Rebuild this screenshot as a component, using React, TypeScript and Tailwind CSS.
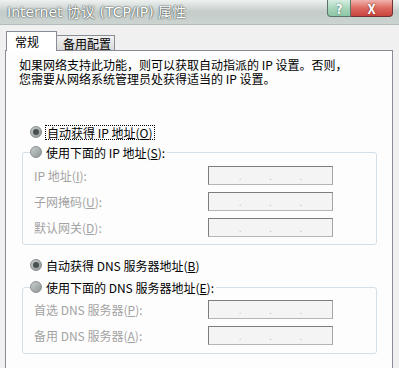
import React from 'react'

const cjk = { fontFamily: '"Noto Sans CJK SC", "Liberation Sans", sans-serif' }

function Radio({ checked }: { checked?: boolean }) {
  return (
    <span className="flex h-[12px] w-[12px] shrink-0 items-center justify-center rounded-full border border-[#8a8f8f] bg-gradient-to-br from-[#c9cdcd] to-[#8f9595]">
      {checked && <span className="h-[6px] w-[6px] rounded-full bg-[#4a4f4f]" />}
    </span>
  )
}

function Mn({ k }: { k: string }) {
  return (
    <>
      (<span className="underline">{k}</span>)
    </>
  )
}

function IpBox() {
  return (
    <div className="flex h-[19px] w-[125px] items-center justify-around border border-[#7d7d7d] border-b-[#b5b5b5] border-r-[#a5a5a5] bg-[#f4f4f4] px-[16px] text-[10px] leading-none text-[#c4c4c4]">
      <span>.</span>
      <span>.</span>
      <span>.</span>
    </div>
  )
}

function Row({ label, last }: { label: React.ReactNode; last?: boolean }) {
  return (
    <div className={`flex items-center ${last ? '' : 'mb-[7px]'}`}>
      <span className="w-[185px] pl-[11px] text-[#a3a3a3]">{label}</span>
      <IpBox />
    </div>
  )
}

export default function App() {
  return (
    <div className="h-[368px] w-[399px] overflow-hidden bg-[#f0f0f0] text-[12px] leading-[13px] text-black" style={cjk}>
      <div className="flex h-[25px] items-start justify-between border-b border-[#b3bcb9] bg-gradient-to-b from-[#eef2f1] via-[#c3ccc9] to-[#ccd4d1]">
        <span
          className="pl-[7px] pt-[4px] text-[14px] leading-[17px] text-white [text-shadow:0_0_2px_#3f4846,0_0_1px_#3f4846]"
          style={{ fontFamily: '"DejaVu Sans", "Noto Sans CJK SC", sans-serif' }}
        >
          Internet 协议 (TCP/IP) 属性
        </span>
        <div className="mr-[6px] flex">
          <div className="flex h-[17px] w-[24px] items-center justify-center rounded-bl-[4px] border border-t-0 border-[#5c7468] bg-gradient-to-b from-[#d6eee2] via-[#a9d6bd] to-[#8cc6a6] text-[13px] font-bold text-white [text-shadow:0_0_2px_#3d6b52]">
            ?
          </div>
          <div className="flex h-[17px] w-[42px] items-center justify-center rounded-br-[4px] border border-l-0 border-t-0 border-[#6e3434] bg-gradient-to-b from-[#f0b3ad] via-[#dc6a62] to-[#c9443c] text-[13px] font-bold text-white [text-shadow:0_0_2px_#6b2520]">
            X
          </div>
        </div>
      </div>

      <div className="ml-[6px] mt-[6px] flex items-end">
        <div className="relative z-10 -mb-px flex h-[20px] w-[51px] items-center border border-b-0 border-[#898c95] bg-white pl-[8px]">
          常规
        </div>
        <div className="flex h-[15px] w-[58px] items-center border border-b-0 border-l-0 border-[#898c95] bg-gradient-to-b from-[#f2f2f2] to-[#d9d9d9] pl-[6px]">
          备用配置
        </div>
      </div>

      <div className="ml-[5px] h-[330px] w-[388px] border border-[#898c95] bg-[#fdfdfd] pt-[7px]">
        <p className="pl-[13px] leading-[14px]">
          如果网络支持此功能，则可以获取自动指派的 IP 设置。否则，
          <br />
          您需要从网络系统管理员处获得适当的 IP 设置。
        </p>

        <div className="ml-[24px] mt-[38px] flex h-[16px] items-center gap-[3px]">
          <Radio checked />
          <span className="border border-dotted border-black px-[1px]">
            自动获得 IP 地址<Mn k="O" />
          </span>
        </div>

        <fieldset className="ml-[16px] mt-[4px] w-[355px] rounded-[3px] border border-[#d5dfe5] p-0 pb-[7px]">
          <legend className="ml-[7px] flex h-[16px] items-center gap-[4px] bg-[#fdfdfd] pr-[2px]">
            <Radio />
            <span>
              使用下面的 IP 地址<Mn k="S" />:
            </span>
          </legend>
          <div className="mt-[6px]">
            <Row label={<>IP 地址<Mn k="I" />:</>} />
            <Row label={<>子网掩码<Mn k="U" />:</>} />
            <Row label={<>默认网关<Mn k="D" />:</>} last />
          </div>
        </fieldset>

        <div className="ml-[24px] mt-[12px] flex h-[16px] items-center gap-[4px]">
          <Radio checked />
          <span>
            自动获得 DNS 服务器地址<Mn k="B" />
          </span>
        </div>

        <fieldset className="ml-[16px] mt-[6px] w-[355px] rounded-[3px] border border-[#d5dfe5] p-0 pb-[8px]">
          <legend className="ml-[7px] flex h-[16px] items-center gap-[4px] bg-[#fdfdfd] pr-[2px]">
            <Radio />
            <span>
              使用下面的 DNS 服务器地址<Mn k="E" />:
            </span>
          </legend>
          <div className="mt-[5px]">
            <Row label={<>首选 DNS 服务器<Mn k="P" />:</>} />
            <Row label={<>备用 DNS 服务器<Mn k="A" />:</>} last />
          </div>
        </fieldset>
      </div>
    </div>
  )
}
